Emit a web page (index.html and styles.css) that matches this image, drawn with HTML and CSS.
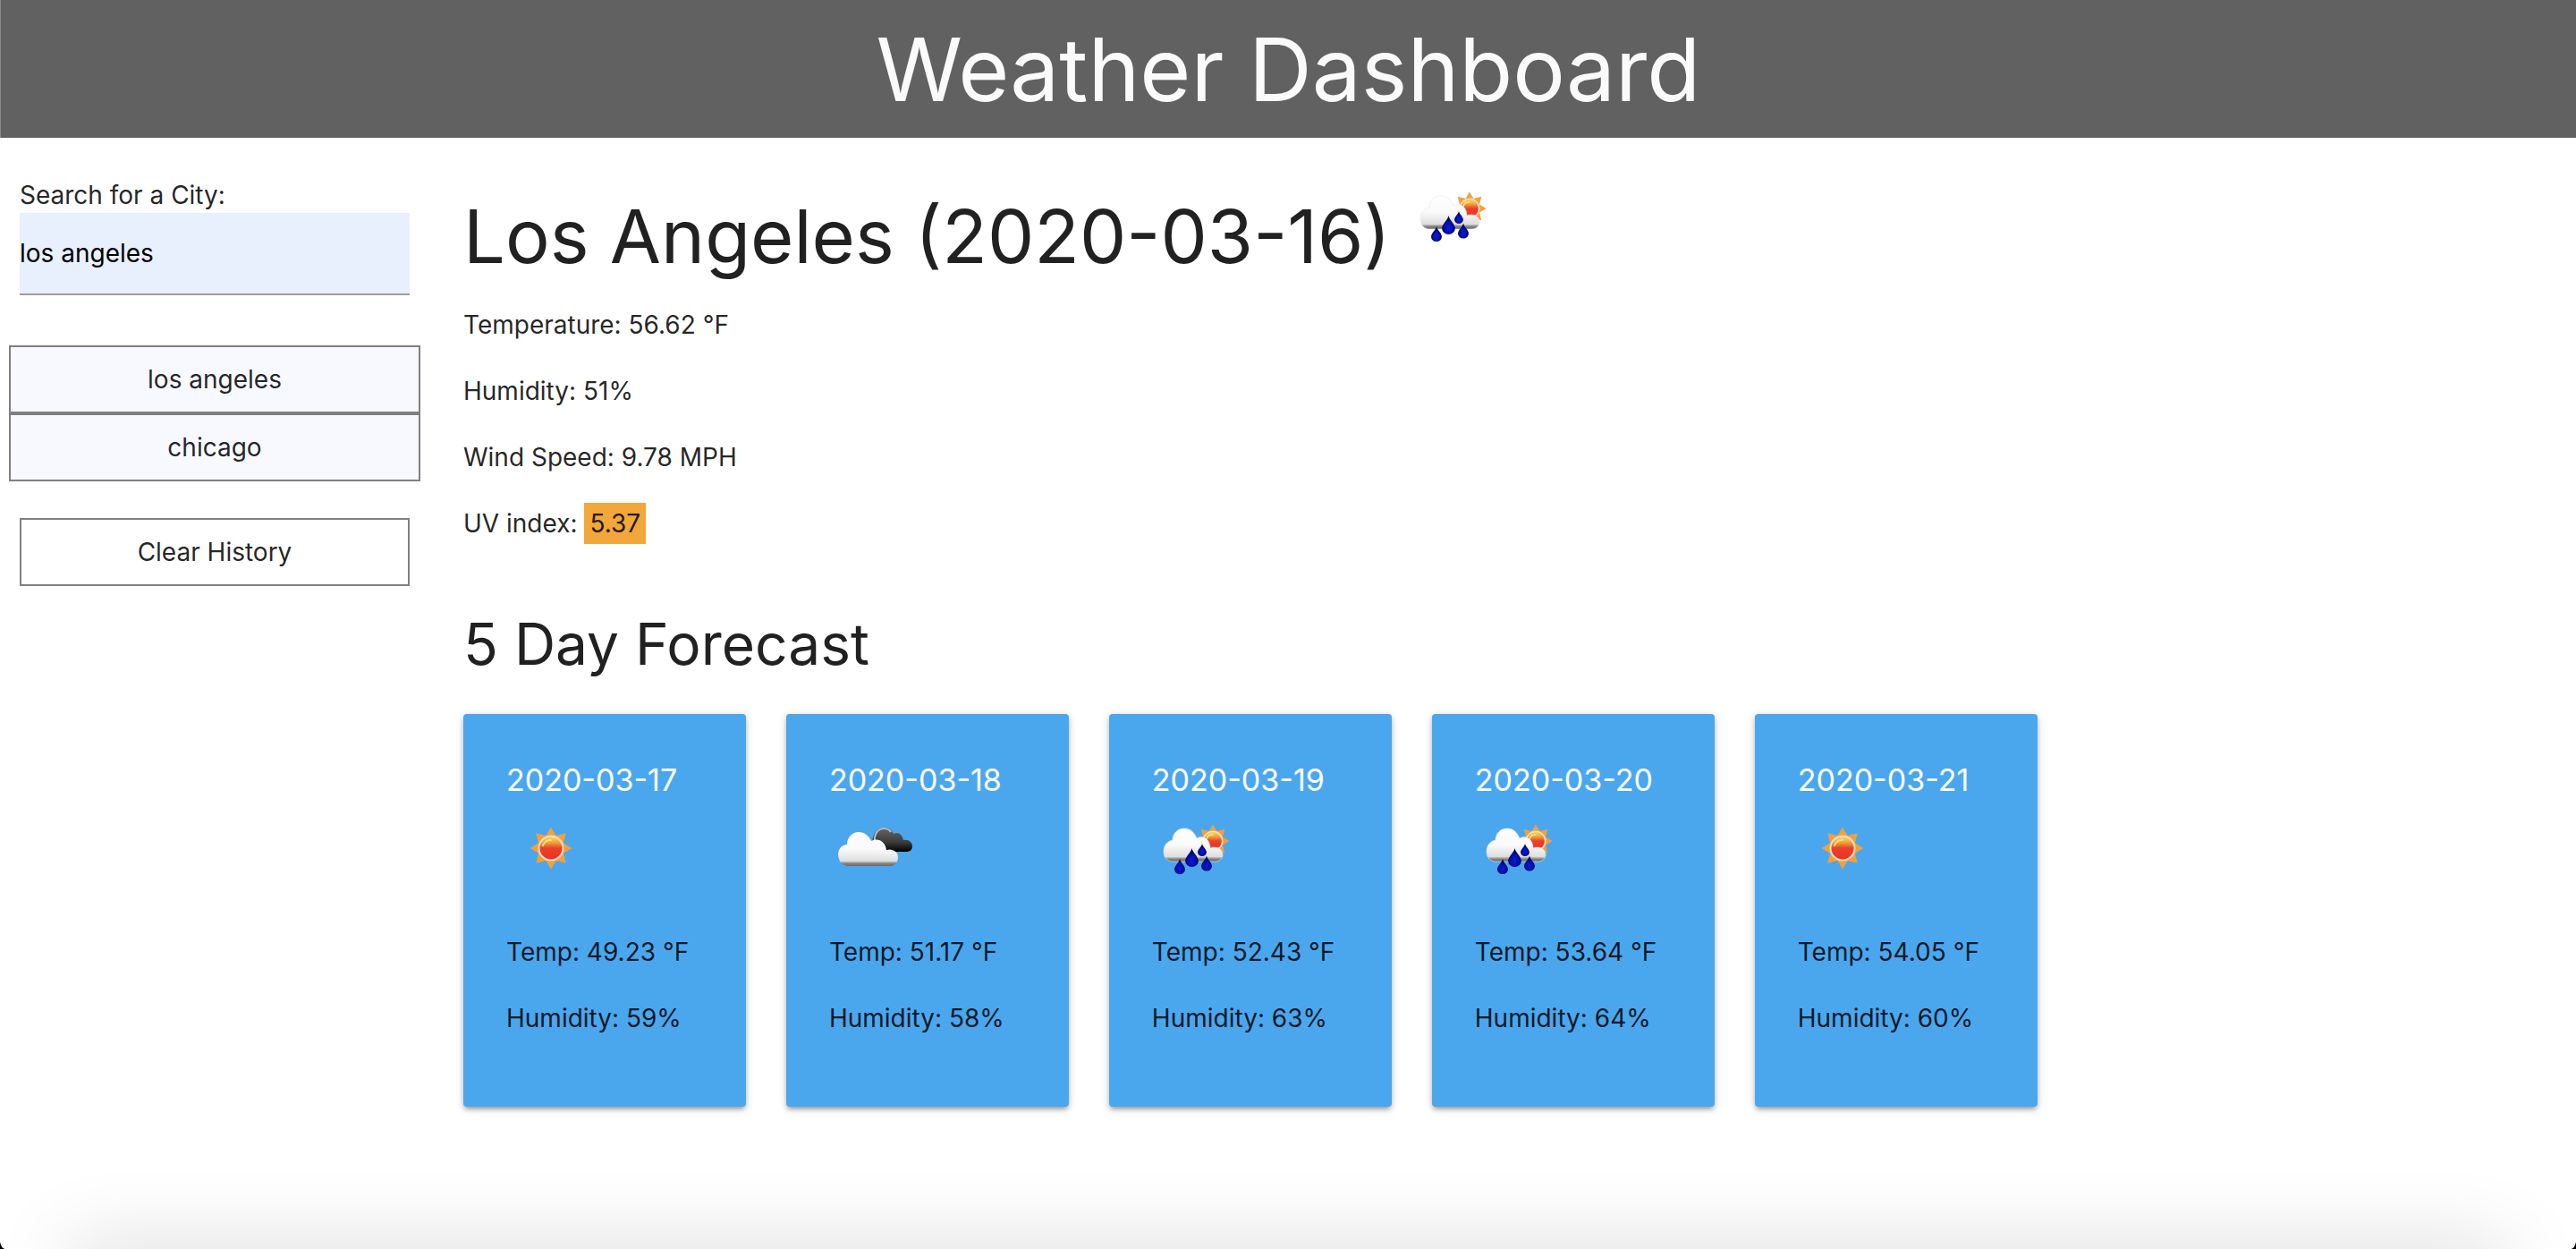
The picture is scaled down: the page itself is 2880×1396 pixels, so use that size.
FILE: index.html
```html
<!DOCTYPE html>
<html lang="en">
<head>
<meta charset="utf-8">
<title>Weather Dashboard</title>
<link rel="stylesheet" href="styles.css">
</head>
<body>
<svg class="defs" aria-hidden="true">
  <defs>
    <linearGradient id="sunFill" x1="0" y1="0" x2="0" y2="1">
      <stop offset="0" stop-color="#f9dc5c"/>
      <stop offset=".25" stop-color="#f3a83c"/>
      <stop offset=".5" stop-color="#e9402a"/>
      <stop offset="1" stop-color="#ea3323"/>
    </linearGradient>
    <linearGradient id="cloudFill" x1="0" y1="0" x2="0" y2="1">
      <stop offset="0" stop-color="#fff"/>
      <stop offset=".5" stop-color="#fafafa"/>
      <stop offset=".85" stop-color="#dedede"/>
      <stop offset=".92" stop-color="#858585"/>
      <stop offset="1" stop-color="#6a6a6a"/>
    </linearGradient>
    <linearGradient id="darkFill" x1="0" y1="0" x2="0" y2="1">
      <stop offset="0" stop-color="#666"/>
      <stop offset=".6" stop-color="#3c3c3c"/>
      <stop offset="1" stop-color="#000"/>
    </linearGradient>
    <radialGradient id="dropFill" cx=".5" cy=".65" r=".5">
      <stop offset="0" stop-color="#0a1ae0"/>
      <stop offset=".55" stop-color="#0510b0"/>
      <stop offset="1" stop-color="#020450"/>
    </radialGradient>
    <symbol id="sunShape" viewBox="-24 -24 48 48">
      <path fill="#f2a03c" d="M0-23.500 5.700-13.900 16.800-16.800 13.900-5.700 23.500 0 13.900 5.700 16.800 16.800 5.700 13.900 0 23.500-5.700 13.900-16.800 16.800-13.900 5.700-23.500 0-13.900-5.700-16.800-16.800-5.700-13.900Z"/>
      <circle r="13.500" fill="url(#sunFill)" stroke="#fbdcc4" stroke-width="2"/>
      <path d="M-9-3A9 9 0 0 1 0-9" fill="none" stroke="#fbe08a" stroke-width="2" stroke-linecap="round"/>
    </symbol>
    <symbol id="drop" viewBox="0 0 14 20">
      <path fill="url(#dropFill)" d="M7 0C8 5 14 9 14 13.500A7 6.500 0 0 1 0 13.500C0 9 6 5 7 0Z"/>
    </symbol>
    <symbol id="sun" viewBox="0 0 100 100">
      <use href="#sunShape" x="26" y="26" width="48" height="48"/>
    </symbol>
    <symbol id="clouds" viewBox="0 0 100 100">
      <path fill="url(#darkFill)" d="M50 54C45 43 50 28 60 27C66 26 70 29 72 34C77 31 82 35 83 41C90 40 93 44 93 48C93 52 90 54 87 54H55Z"/>
      <path fill="none" stroke="#bbb" stroke-width="2" d="M51 42C50 33 56 28 61 28C65 28 68 30 69 32"/>
      <path fill="url(#cloudFill)" d="M20 70C12 67 12 66 10 58C10 50 15 46 20 46C20 38 26 32 33 32C40 32 45 37 47 42C55 38 63 43 64 52C71 50 77 54 77 60C77 66 73 69 70 70Z"/>
    </symbol>
    <symbol id="rain" viewBox="0 0 100 100">
      <use href="#sunShape" x="49" y="23" width="38" height="38"/>
      <path fill="url(#cloudFill)" stroke="#e8e8e8" stroke-width="1" stroke-opacity=".6" d="M22 65C15 64 13 58 13 54C13 47 17 42 23 41C23 34 28 28 36 28C43 28 47 32 50 39C57 35 65 40 65 50C72 47 79 51 79 57C79 62 75 65 71 65Z"/>
      <use href="#drop" x="25" y="62" width="12" height="17"/>
      <use href="#drop" x="37" y="50" width="15" height="21"/>
      <use href="#drop" x="51" y="45" width="10" height="14"/>
      <use href="#drop" x="55" y="58" width="12" height="18"/>
    </symbol>
  </defs>
</svg>

<header class="banner"><h1 class="banner-title">Weather Dashboard</h1></header>

<div class="layout">
  <aside class="sidebar">
    <form class="search">
      <label class="search-label" for="city">Search for a City:</label>
      <input class="search-input" id="city" type="text" value="los angeles">
    </form>
    <div class="history">
      <button class="history-item" type="button">los angeles</button>
      <button class="history-item" type="button">chicago</button>
    </div>
    <button class="clear" type="button">Clear History</button>
  </aside>

  <main class="content">
    <section class="current">
      <div class="city">
        <h2 class="city-name">Los Angeles (2020-03-16)</h2>
        <svg class="icon" role="img" aria-label="Rain"><use href="#rain"/></svg>
      </div>
      <p class="reading">Temperature: 56.62 °F</p>
      <p class="reading">Humidity: 51%</p>
      <p class="reading">Wind Speed: 9.78 MPH</p>
      <p class="reading">UV index: <span class="uv">5.37</span></p>
    </section>

    <section class="forecast">
      <h3 class="forecast-title">5 Day Forecast</h3>
      <div class="cards">
        <article class="card">
          <h4 class="card-date">2020-03-17</h4>
          <svg class="icon" role="img" aria-label="Clear"><use href="#sun"/></svg>
          <div class="card-readings"><p class="reading">Temp: 49.23 °F</p><p class="reading">Humidity: 59%</p></div>
        </article>
        <article class="card">
          <h4 class="card-date">2020-03-18</h4>
          <svg class="icon" role="img" aria-label="Clouds"><use href="#clouds"/></svg>
          <div class="card-readings"><p class="reading">Temp: 51.17 °F</p><p class="reading">Humidity: 58%</p></div>
        </article>
        <article class="card">
          <h4 class="card-date">2020-03-19</h4>
          <svg class="icon" role="img" aria-label="Rain"><use href="#rain"/></svg>
          <div class="card-readings"><p class="reading">Temp: 52.43 °F</p><p class="reading">Humidity: 63%</p></div>
        </article>
        <article class="card">
          <h4 class="card-date">2020-03-20</h4>
          <svg class="icon" role="img" aria-label="Rain"><use href="#rain"/></svg>
          <div class="card-readings"><p class="reading">Temp: 53.64 °F</p><p class="reading">Humidity: 64%</p></div>
        </article>
        <article class="card">
          <h4 class="card-date">2020-03-21</h4>
          <svg class="icon" role="img" aria-label="Clear"><use href="#sun"/></svg>
          <div class="card-readings"><p class="reading">Temp: 54.05 °F</p><p class="reading">Humidity: 60%</p></div>
        </article>
      </div>
    </section>
  </main>
</div>
<div class="edge-shadow"></div>
</body>
</html>
```
FILE: styles.css
```css
* {
  box-sizing: border-box;
}

body {
  margin: 0;
  min-height: 100vh;
  background: #fff;
  color: rgba(0, 0, 0, 0.87);
  font: 28px/46px Inter, "Liberation Sans", sans-serif;
}

h1, h2, h3, h4, p {
  margin: 0;
  font-weight: 400;
}

button, input {
  font: inherit;
  color: inherit;
}

.defs {
  position: absolute;
  width: 0;
  height: 0;
}

.banner {
  padding: 16px 24px 14px;
  background: #616161;
  border-left: 1px solid #8a8a8a;
  color: #fafafa;
  text-align: center;
}

.banner-title {
  font-size: 98px;
  line-height: 124px;
}

.layout {
  display: grid;
  grid-template-columns: 1fr 5fr;
}

.sidebar {
  padding: 44px 22px 0;
}

.search {
  display: flex;
  flex-direction: column;
}

.search-label {
  line-height: 40px;
}

.search-input {
  width: 100%;
  height: 92px;
  padding: 0;
  border: 0;
  border-bottom: 2px solid #9e9e9e;
  border-radius: 0;
  outline: 0;
  background: #e8f0fe;
  color: #000;
}

.history {
  display: flex;
  flex-direction: column;
  margin: 56px -12px 41px;
}

.history-item,
.clear {
  width: 100%;
  height: 76px;
  padding: 0;
  border: 2px solid #808080;
  border-radius: 0;
  background: #fff;
}

.history-item {
  background: #f8f8ff;
}

.content {
  padding: 37px 22px 48px 38px;
}

.icon {
  display: block;
  flex: none;
  width: 100px;
  height: 100px;
}

.city {
  display: flex;
  gap: 20px;
  margin-bottom: 28px;
}

.city-name {
  padding-top: 25px;
  font-size: 83px;
  line-height: 96px;
}

.current {
  display: flex;
  flex-direction: column;
}

.reading {
  margin-bottom: 28px;
}

.uv {
  display: inline-block;
  padding: 0 6px;
  background: #f2a73b;
}

.forecast-title {
  margin: 46px 0 40px;
  font-size: 64px;
  line-height: 76px;
}

.cards {
  display: grid;
  grid-template-columns: repeat(5, 1fr);
  gap: 45px;
  width: 75.2%;
}

.card {
  padding: 48px;
  border-radius: 4px;
  background: #4aa7ee;
  box-shadow: 0 4px 4px rgba(0, 0, 0, 0.14), 0 6px 2px -4px rgba(0, 0, 0, 0.12), 0 2px 10px rgba(0, 0, 0, 0.2);
  white-space: nowrap;
}

.card-date {
  color: #fff;
  font-size: 34px;
  line-height: 52px;
}

.card-readings {
  margin-top: 43px;
}

/* soft shade rising from the bottom edge of the window */
.edge-shadow {
  position: fixed;
  top: 100%;
  right: 80px;
  left: 80px;
  height: 60px;
  box-shadow: 0 0 90px rgba(0, 0, 0, 0.17);
}

/* rounded window corners */
body::before,
body::after {
  content: "";
  position: fixed;
  bottom: 0;
  width: 5px;
  height: 8px;
  background: #000;
}

body::before {
  left: 0;
  clip-path: polygon(0 0, 20% 45%, 45% 75%, 100% 100%, 0 100%);
}

body::after {
  right: 0;
  clip-path: polygon(100% 0, 80% 45%, 55% 75%, 0 100%, 100% 100%);
}
```
